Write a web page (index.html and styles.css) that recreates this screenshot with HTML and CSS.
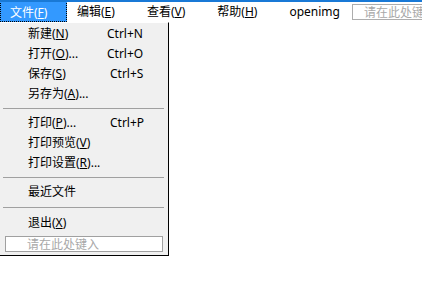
FILE: index.html
```html
<!DOCTYPE html>
<html lang="zh-CN">

<head>
	<meta charset="UTF-8" />
	<meta name="viewport" content="width=device-width, initial-scale=1.0" />
	<title>openimg</title>
	<link rel="stylesheet" href="styles.css">
</head>

<body>
	<div class="menubar">
		<div class="bar-item active">文件(<u>F</u>)</div>
		<div class="bar-item">编辑(<u>E</u>)</div>
		<div class="bar-item">查看(<u>V</u>)</div>
		<div class="bar-item">帮助(<u>H</u>)</div>
		<div class="bar-item last">openimg</div>
		<input class="bar-input" type="text" placeholder="请在此处键入" />
	</div>

	<div class="popup">
		<div class="item"><span class="label">新建(<u>N</u>)</span><span class="key">Ctrl+N</span></div>
		<div class="item"><span class="label">打开(<u>O</u>)...</span><span class="key">Ctrl+O</span></div>
		<div class="item"><span class="label">保存(<u>S</u>)</span><span class="key shift">Ctrl+S</span></div>
		<div class="item"><span class="label">另存为(<u>A</u>)...</span></div>
		<div class="sep"></div>
		<div class="item"><span class="label">打印(<u>P</u>)...</span><span class="key shift">Ctrl+P</span></div>
		<div class="item"><span class="label">打印预览(<u>V</u>)</span></div>
		<div class="item"><span class="label">打印设置(<u>R</u>)...</span></div>
		<div class="sep"></div>
		<div class="item"><span class="label">最近文件</span></div>
		<div class="sep"></div>
		<div class="item"><span class="label">退出(<u>X</u>)</span></div>
		<input class="menu-input" type="text" placeholder="请在此处键入" />
	</div>
</body>

</html>
```

FILE: styles.css
```css
body {
	margin: 0;
	background: #fff;
	font-family: "Noto Sans", "Noto Sans CJK SC", sans-serif;
	font-size: 12px;
	color: #000;
	overflow: hidden;
}

u {
	text-decoration: underline;
	text-underline-offset: 1px;
}

.menubar {
	display: flex;
	align-items: center;
	height: 20px;
	border-top: 2px solid #1979d6;
	background: #fff;
	overflow: hidden;
}

.bar-item {
	flex-shrink: 0;
	padding: 0 10px;
	height: 20px;
	line-height: 19px;
	margin-right: 12px;
	white-space: nowrap;
}

.bar-item.last {
	margin-right: 0;
}

.bar-item.active {
	margin-top: -2px;
	height: 21px;
	line-height: 21px;
	box-sizing: border-box;
	width: 67px;
	background: #3399ff;
	color: #fff;
	border: 1px dotted #000;
	margin-right: 0;
	padding: 0 0 0 9px;
}

.bar-input {
	flex-shrink: 0;
	margin-left: 2px;
	width: 80px;
	height: 16px;
	box-sizing: border-box;
	border: 1px solid #adadad;
	padding: 0 0 0 11px;
	font: inherit;
	font-size: 12px;
	outline: none;
}

.bar-input::placeholder,
.menu-input::placeholder {
	color: #a8a8a8;
}

.popup {
	width: 168px;
	padding: 1px 0 3px;
	background: #f0f0f0;
	border-right: 1px solid #000;
	border-bottom: 1px solid #000;
	border-top: 1px solid #fff;
	display: flex;
	flex-direction: column;
}

.item {
	display: flex;
	height: 20px;
	line-height: 20px;
	padding-left: 28px;
	white-space: nowrap;
}

.label {
	width: 79px;
}

.key.shift {
	margin-left: 3px;
}

.sep {
	height: 1px;
	margin: 4px 4px 4px 3px;
	background: #a0a0a0;
}

.sep + .item + .sep {
	margin-top: 5px;
}

.sep + .item + .sep + .item {
	margin-top: 1px;
}

.menu-input {
	margin: 3px 5px 0 5px;
	height: 16px;
	box-sizing: border-box;
	border: 1px solid #a0a0a0;
	padding: 0 0 0 21px;
	font: inherit;
	font-size: 12px;
	background: #fff;
	outline: none;
}
```
